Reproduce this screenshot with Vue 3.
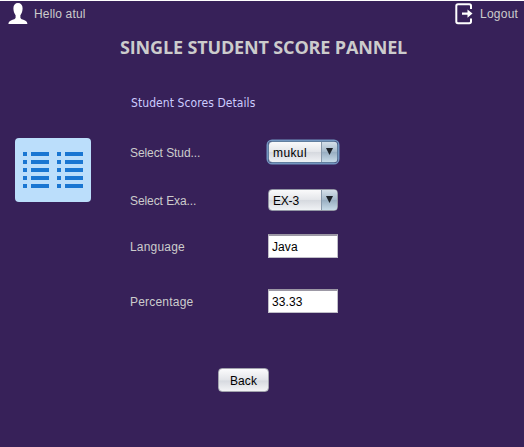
<script setup>
import { ref } from 'vue'

const user = ref('atul')
const fields = [
  { label: 'Select Stud...', value: 'mukul', kind: 'combo', focused: true },
  { label: 'Select Exa...', value: 'EX-3', kind: 'combo' },
  { label: 'Language', value: 'Java', kind: 'text' },
  { label: 'Percentage', value: '33.33', kind: 'text' },
]
const listRows = [0, 1, 2, 3, 4]
</script>

<template>
  <main class="window">
    <header class="topbar">
      <div class="user">
        <svg width="20" height="22" viewBox="0 0 20 22">
          <path
            fill="#fff"
            d="M10 0C7.200 0 5.400 2 5.400 5.200C5.400 8 6.300 10.500 7.600 12.200V14.800C7.200 16 5.800 16.500 4 17.100C1.700 17.900 .6 19 .4 21H19.400C19.200 19 18.300 17.900 16 17.100C14.200 16.500 12.800 16 12.400 14.800V12.200C13.700 10.500 14.600 8 14.600 5.200C14.600 2 12.800 0 10 0Z"
          />
        </svg>
        <span>Hello {{ user }}</span>
      </div>
      <div class="logout">
        <svg width="19" height="22" viewBox="0 0 19 22">
          <path d="M16 6V3Q16 1.300 14.300 1.300H3Q1.300 1.300 1.300 3V18.500Q1.300 20.200 3 20.200H14.300Q16 20.200 16 18.500V15.500" fill="none" stroke="#fff" stroke-width="2" />
          <path d="M7 9.500H12.500V6.500L17.500 10.600L12.500 14.700V11.700H7Z" fill="#fff" />
        </svg>
        <span>Logout</span>
      </div>
    </header>

    <h1>SINGLE STUDENT SCORE PANNEL</h1>

    <div class="content">
      <svg class="board" width="76" height="64" viewBox="0 0 76 64">
        <rect width="76" height="64" rx="4" fill="#bbdefb" />
        <g v-for="r in listRows" :key="r" fill="#1976d2">
          <rect x="8" :y="14 + r * 8" width="4" height="4" />
          <rect x="16" :y="14 + r * 8" width="18" height="4" />
          <rect x="42" :y="14 + r * 8" width="4" height="4" />
          <rect x="50" :y="14 + r * 8" width="18" height="4" />
        </g>
      </svg>

      <section class="form">
        <h2>Student Scores Details</h2>
        <div v-for="f in fields" :key="f.label" class="row" :class="f.kind">
          <span class="label">{{ f.label }}</span>
          <div v-if="f.kind === 'combo'" class="select" :class="{ focused: f.focused }">
            <span class="value">{{ f.value }}</span>
            <span class="arrow">
              <svg width="7" height="7" viewBox="0 0 7 7"><path d="M0 0H7L3.500 7Z" fill="#1c2227" /></svg>
            </span>
          </div>
          <div v-else class="input">{{ f.value }}</div>
        </div>
        <button class="back">Back</button>
      </section>
    </div>
  </main>
</template>

<style>
body {
  background: #372159;
}
</style>

<style scoped>
.window {
  box-sizing: border-box;
  width: 524px;
  height: 447px;
  overflow: hidden;
  border-top: 1px solid #fff;
  background: #372159;
  color: #ccc;
  font: 12px/16px "Liberation Sans", Arial, sans-serif;
}
.topbar {
  display: flex;
  justify-content: space-between;
  height: 26px;
  padding: 2px 5px 0 8px;
}
.user,
.logout {
  display: flex;
  align-items: flex-start;
}
.user {
  gap: 6px;
  letter-spacing: 0.15px;
}
.logout {
  width: 64px;
  gap: 6px;
  letter-spacing: 0.25px;
}
.topbar span {
  padding-top: 3px;
}
h1 {
  margin: 6px 0 0 120px;
  font: bold 18px/24px "Open Sans", sans-serif;
  letter-spacing: -0.15px;
  white-space: nowrap;
}
.content {
  display: flex;
  align-items: flex-start;
  gap: 39px;
  padding: 36px 0 0 15px;
}
.board {
  margin-top: 43px;
}
h2 {
  margin: 0 0 29px 1px;
  color: #ccccff;
  font: 12px/16px "DejaVu Sans Condensed", "DejaVu Sans", sans-serif;
  letter-spacing: 0.08px;
}
.row {
  display: flex;
  align-items: center;
  height: 24px;
  margin-bottom: 24px;
}
.row:nth-of-type(2) {
  margin-bottom: 22px;
}
.row:nth-of-type(3) {
  margin-bottom: 31px;
}
.row:nth-of-type(4) {
  margin-bottom: 55px;
}
.label {
  width: 138px;
  padding-top: 2px;
  letter-spacing: 0.2px;
}
.combo .label {
  letter-spacing: -0.08px;
}
.select {
  display: flex;
  box-sizing: border-box;
  width: 70px;
  height: 22px;
  overflow: hidden;
  border: 1px solid #9296a4;
  border-radius: 4px;
  background: linear-gradient(#fafafb, #e4e6ea 48%, #d6d9df 52%, #f0f2f5);
  color: #000;
}
.select.focused {
  border-color: #617e9e;
  box-shadow: 0 0 0 1.5px #7396c0;
}
.value {
  width: 52px;
  box-sizing: border-box;
  padding: 3px 0 0 4px;
  letter-spacing: -0.2px;
}
.focused .value {
  letter-spacing: 0.4px;
}
.arrow {
  display: flex;
  flex: 1;
  justify-content: center;
  padding-top: 6px;
  border-left: 1px solid #8798aa;
  background: linear-gradient(#d5e0e9, #a6bacb 48%, #99afc2 52%, #c7dbe8);
}
.input {
  box-sizing: border-box;
  width: 70px;
  height: 24px;
  padding: 3px 3px 0;
  border: 1px solid #c0bec8;
  border-top: 2px solid #9c98a5;
  background: #fff;
  color: #000;
  letter-spacing: 0.1px;
}
.back {
  display: block;
  box-sizing: border-box;
  width: 51px;
  height: 24px;
  margin-left: 88px;
  padding: 1px 0 0;
  border: 1px solid #a2a3ae;
  border-radius: 4px;
  background: linear-gradient(#fbfbfc, #e3e5e9 48%, #d7dae0 55%, #f3f4f6);
  color: #000;
  font: inherit;
  letter-spacing: 0.1px;
}
</style>
